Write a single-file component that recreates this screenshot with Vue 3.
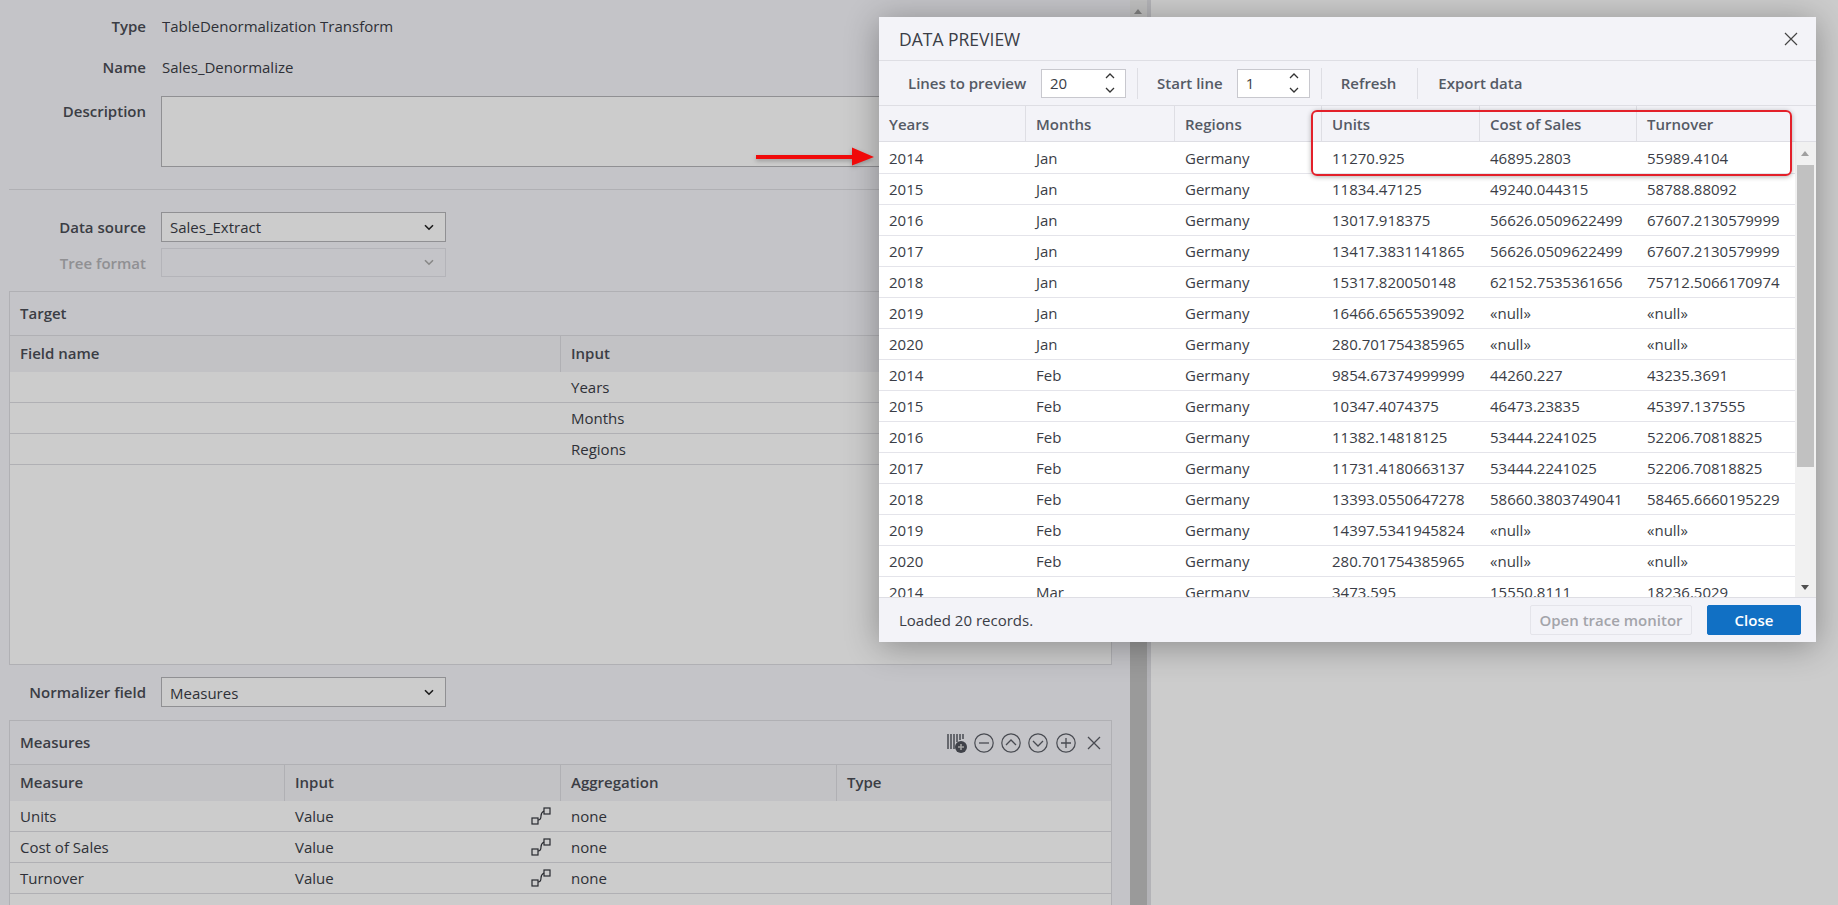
<script setup>
const targetRows = ['Years', 'Months', 'Regions']
const measureRows = ['Units', 'Cost of Sales', 'Turnover']

const previewRows = [
  ['2014', 'Jan', 'Germany', '11270.925', '46895.2803', '55989.4104'],
  ['2015', 'Jan', 'Germany', '11834.47125', '49240.044315', '58788.88092'],
  ['2016', 'Jan', 'Germany', '13017.918375', '56626.0509622499', '67607.2130579999'],
  ['2017', 'Jan', 'Germany', '13417.3831141865', '56626.0509622499', '67607.2130579999'],
  ['2018', 'Jan', 'Germany', '15317.820050148', '62152.7535361656', '75712.5066170974'],
  ['2019', 'Jan', 'Germany', '16466.6565539092', '«null»', '«null»'],
  ['2020', 'Jan', 'Germany', '280.701754385965', '«null»', '«null»'],
  ['2014', 'Feb', 'Germany', '9854.67374999999', '44260.227', '43235.3691'],
  ['2015', 'Feb', 'Germany', '10347.4074375', '46473.23835', '45397.137555'],
  ['2016', 'Feb', 'Germany', '11382.14818125', '53444.2241025', '52206.70818825'],
  ['2017', 'Feb', 'Germany', '11731.4180663137', '53444.2241025', '52206.70818825'],
  ['2018', 'Feb', 'Germany', '13393.0550647278', '58660.3803749041', '58465.6660195229'],
  ['2019', 'Feb', 'Germany', '14397.5341945824', '«null»', '«null»'],
  ['2020', 'Feb', 'Germany', '280.701754385965', '«null»', '«null»'],
  ['2014', 'Mar', 'Germany', '3473.595', '15550.8111', '18236.5029'],
]
const previewCols = ['Years', 'Months', 'Regions', 'Units', 'Cost of Sales', 'Turnover']
</script>

<template>
  <div class="page">
    <div class="editor">
      <div class="info-row"><span class="lbl">Type</span><span class="val">TableDenormalization Transform</span></div>
      <div class="info-row"><span class="lbl">Name</span><span class="val">Sales_Denormalize</span></div>
      <div class="desc-row">
        <span class="lbl">Description</span>
        <div class="textarea"></div>
      </div>
      <div class="divider"></div>

      <div class="sel-row">
        <span class="lbl lbl--bold">Data source</span>
        <div class="select">
          <span>Sales_Extract</span>
          <svg class="chev" width="10" height="7" viewBox="0 0 10 7"><path d="M1 1.2l4 4 4-4" fill="none" stroke="#222" stroke-width="1.6" /></svg>
        </div>
      </div>
      <div class="sel-row sel-row--off">
        <span class="lbl lbl--bold">Tree format</span>
        <div class="select select--off">
          <svg class="chev" width="10" height="7" viewBox="0 0 10 7"><path d="M1 1.2l4 4 4-4" fill="none" stroke="#aaa" stroke-width="1.6" /></svg>
        </div>
      </div>

      <section class="panel panel--target">
        <div class="panel-head">Target</div>
        <div class="grid-head grid-head--target">
          <div class="gh">Field name</div>
          <div class="gh">Input</div>
        </div>
        <div v-for="r in targetRows" :key="r" class="grid-row grid-row--target">
          <div></div>
          <div class="gc">{{ r }}</div>
        </div>
      </section>

      <div class="norm-row">
        <span class="lbl lbl--norm">Normalizer field</span>
        <div class="select">
          <span class="select-low">Measures</span>
          <svg class="chev" width="10" height="7" viewBox="0 0 10 7"><path d="M1 1.2l4 4 4-4" fill="none" stroke="#222" stroke-width="1.6" /></svg>
        </div>
      </div>

      <section class="panel panel--measures">
        <div class="panel-head panel-head--tools">
          <span>Measures</span>
          <div class="tools">
            <svg width="22" height="20" viewBox="0 0 22 20" class="tool-bar">
              <path d="M2 1v15M5 1v15M8 1v15M11 1v8M14 1v6M17 1v5" fill="none" stroke="#5a5d66" stroke-width="1.5" />
              <circle cx="15" cy="14" r="6" fill="#50535c" />
              <path d="M15 11v6M12 14h6" stroke="#ccc" stroke-width="1.6" />
            </svg>
            <svg width="20" height="20" viewBox="0 0 20 20"><circle cx="10" cy="10" r="9.2" class="ring" /><path d="M5 10h10" class="ink" /></svg>
            <svg width="20" height="20" viewBox="0 0 20 20"><circle cx="10" cy="10" r="9.2" class="ring" /><path d="M5 12l5-5 5 5" class="ink" /></svg>
            <svg width="20" height="20" viewBox="0 0 20 20"><circle cx="10" cy="10" r="9.2" class="ring" /><path d="M5 8l5 5 5-5" class="ink" /></svg>
            <svg width="20" height="20" viewBox="0 0 20 20"><circle cx="10" cy="10" r="9.2" class="ring" /><path d="M5 10h10M10 5v10" class="ink" /></svg>
            <svg width="14" height="14" viewBox="0 0 14 14" class="tool-x"><path d="M1 1l12 12M13 1L1 13" class="ink" /></svg>
          </div>
        </div>
        <div class="grid-head grid-head--measures">
          <div class="gh">Measure</div>
          <div class="gh">Input</div>
          <div class="gh">Aggregation</div>
          <div class="gh">Type</div>
        </div>
        <div v-for="r in measureRows" :key="r" class="grid-row grid-row--measures">
          <div class="gc">{{ r }}</div>
          <div class="gc gc--link">
            <span>Value</span>
            <svg width="20" height="18" viewBox="0 0 20 18">
              <rect x="1" y="11" width="6" height="6" class="link-ico" />
              <rect x="13" y="1" width="6" height="6" class="link-ico" />
              <path d="M7 13c3 0 3-2 3-4s1-4 3-5" class="link-ico" />
            </svg>
          </div>
          <div class="gc">none</div>
          <div></div>
        </div>
      </section>
    </div>

    <div class="editor-scroll">
      <span class="tri tri--up"></span>
      <div class="editor-thumb"></div>
    </div>
    <div class="splitter"></div>
    <div class="side"></div>

    <div class="overlay"></div>

    <div class="dialog">
      <header class="dlg-title">
        <span>DATA PREVIEW</span>
        <svg width="14" height="14" viewBox="0 0 14 14"><path d="M1 1l12 12M13 1L1 13" fill="none" stroke="#444" stroke-width="1.2" /></svg>
      </header>

      <div class="dlg-tools">
        <span class="tool-lbl tool-lbl--lines">Lines to preview</span>
        <div class="spin spin--lines">
          <span>20</span>
          <svg width="10" height="22" viewBox="0 0 10 22"><path d="M1 6l4-4 4 4M1 16l4 4 4-4" fill="none" stroke="#333" stroke-width="1.3" /></svg>
        </div>
        <i class="sep"></i>
        <span class="tool-lbl">Start line</span>
        <div class="spin spin--start">
          <span>1</span>
          <svg width="10" height="22" viewBox="0 0 10 22"><path d="M1 6l4-4 4 4M1 16l4 4 4-4" fill="none" stroke="#333" stroke-width="1.3" /></svg>
        </div>
        <i class="sep"></i>
        <span class="tool-lbl">Refresh</span>
        <i class="sep"></i>
        <span class="tool-lbl">Export data</span>
      </div>

      <div class="pv-head">
        <div v-for="c in previewCols" :key="c" class="pv-th">{{ c }}</div>
      </div>

      <div class="pv-body">
        <div class="pv-rows">
          <div v-for="(row, i) in previewRows" :key="i" class="pv-row">
            <div v-for="(cell, j) in row" :key="j" class="pv-td">{{ cell }}</div>
          </div>
        </div>
        <div class="pv-scroll">
          <span class="tri tri--up"></span>
          <div class="pv-thumb"></div>
          <span class="tri tri--down"></span>
        </div>
      </div>

      <footer class="dlg-foot">
        <span class="status">Loaded 20 records.</span>
        <button class="btn btn--off">Open trace monitor</button>
        <button class="btn btn--primary">Close</button>
      </footer>
    </div>

    <!-- annotations drawn on top of the screenshot -->
    <div class="mark-box"></div>
    <svg class="mark-arrow" width="120" height="20" viewBox="0 0 120 20">
      <path d="M0 8h96v-7.500L118 10 96 18.500V12H0z" fill="#f00a0a" />
    </svg>
  </div>
</template>

<style>
html, body { margin: 0; padding: 0; }
</style>

<style scoped>
.page {
  position: relative;
  display: flex;
  width: 1838px;
  height: 905px;
  overflow: hidden;
  background: #f6f6fa;
  font-family: "Open Sans", "Liberation Sans", sans-serif;
  font-size: 15px;
  color: #3a3d46;
}

.editor {
  width: 1130px;
  height: 905px;
  flex-shrink: 0;
  padding: 5px 18px 0 9px;
  box-sizing: border-box;
  overflow: hidden;
}

.info-row {
  display: flex;
  align-items: center;
  height: 41px;
}
.lbl {
  width: 137px;
  flex-shrink: 0;
  text-align: right;
  margin-right: 15px;
  font-weight: 600;
  color: #4a4d56;
}
.val { color: #3a3d46; padding-left: 1px; }

.desc-row {
  display: flex;
  height: 70px;
  margin-top: 9px;
}
.desc-row .lbl { padding-top: 5px; }
.textarea {
  width: 100%;
  height: 71px;
  box-sizing: border-box;
  background: #fff;
  border: 1px solid #b4b4b8;
}

.divider {
  height: 1px;
  margin-top: 23px;
  background: #dcdce2;
}

.sel-row {
  display: flex;
  align-items: center;
  height: 30px;
  margin-top: 22px;
}
.sel-row--off {
  margin-top: 6px;
  height: 29px;
}
.sel-row--off .lbl { color: #b4b4b8; }

.select {
  display: flex;
  align-items: center;
  justify-content: space-between;
  width: 285px;
  height: 30px;
  box-sizing: border-box;
  padding: 0 11px 0 8px;
  background: #fff;
  border: 1px solid #b4b4b8;
  flex-shrink: 0;
}
.select--off {
  height: 29px;
  background: #f6f6fa;
  border-color: #e2e2e8;
  justify-content: flex-end;
}
.select-low { padding-top: 2px; }
.chev { display: block; }

.panel {
  box-sizing: border-box;
  border: 1px solid #dcdce2;
  background: #fff;
}
.panel--target {
  height: 374px;
  margin-top: 14px;
}
.panel--measures {
  margin-top: 13px;
  height: 240px;
}
.panel-head {
  height: 44px;
  line-height: 43px;
  padding-left: 10px;
  box-sizing: border-box;
  background: #f6f6fa;
  border-bottom: 1px solid #dcdce2;
  font-weight: 600;
  color: #4a4d56;
}
.panel-head--tools {
  display: flex;
  align-items: center;
  justify-content: space-between;
  padding-right: 10px;
}
.tools {
  display: flex;
  align-items: center;
  gap: 7.300px;
}
.tool-bar { margin-right: -1px; }
.tool-x { margin-left: 4px; }
.ring { fill: none; stroke: #5a5d66; stroke-width: 1.2; }
.ink { fill: none; stroke: #5a5d66; stroke-width: 1.3; }

.grid-head,
.grid-row {
  display: grid;
}
.grid-head--target,
.grid-row--target { grid-template-columns: 551px 1fr; }
.grid-head--measures,
.grid-row--measures { grid-template-columns: 275px 276px 276px 1fr; }

.grid-head {
  height: 36px;
  background: #f3f3f7;
}
.gh {
  display: flex;
  align-items: center;
  padding: 0 0 2px 10px;
  border-right: 1px solid #dcdce2;
  font-weight: 600;
  color: #4a4d56;
}
.gh:last-child { border-right: none; }
.grid-row {
  height: 31px;
  box-sizing: border-box;
  border-bottom: 1px solid #dcdce2;
}
.gc {
  display: flex;
  align-items: center;
  padding-left: 10px;
  line-height: 30px;
}
.gc--link {
  justify-content: space-between;
  padding-right: 10px;
}
.link-ico { fill: none; stroke: #33353c; stroke-width: 1.2; }

.norm-row {
  display: flex;
  align-items: center;
  height: 30px;
  margin-top: 12px;
}
.lbl--norm { font-weight: 600; }

.editor-scroll {
  position: relative;
  width: 17px;
  flex-shrink: 0;
  background: #f1f1f1;
}
.editor-scroll .tri--up {
  position: absolute;
  top: 9px;
  left: 4px;
}
.editor-thumb {
  position: absolute;
  top: 60px;
  bottom: 0;
  left: 0;
  right: 0;
  background: #c1c1c1;
}
.splitter {
  width: 4px;
  flex-shrink: 0;
  background: #e0e0e5;
}
.side {
  flex: 1;
  background: #ffffff;
}

.tri {
  display: block;
  width: 0;
  height: 0;
  border-left: 4.500px solid transparent;
  border-right: 4.500px solid transparent;
}
.tri--up { border-bottom: 5px solid #a0a0a0; }
.tri--down { border-top: 5px solid #505050; }

.overlay {
  position: absolute;
  inset: 0;
  background: rgba(0, 0, 0, 0.2);
}

.dialog {
  position: absolute;
  left: 879px;
  top: 17px;
  width: 937px;
  height: 625px;
  display: flex;
  flex-direction: column;
  background: #f3f3f8;
  box-shadow: 0 4px 32px rgba(0, 0, 0, 0.32);
}
.dlg-title {
  display: flex;
  align-items: center;
  justify-content: space-between;
  height: 44px;
  flex-shrink: 0;
  box-sizing: border-box;
  padding: 0 18px 0 20px;
  border-bottom: 1px solid #dedee4;
  font-size: 17.500px;
  color: #3a3d46;
}
.dlg-tools {
  display: flex;
  align-items: center;
  height: 45px;
  flex-shrink: 0;
  box-sizing: border-box;
  padding-left: 29px;
  border-bottom: 1px solid #dedee4;
}
.tool-lbl {
  font-weight: 600;
  color: #555a65;
  white-space: nowrap;
}
.tool-lbl--lines { width: 133px; flex-shrink: 0; }
.spin {
  display: flex;
  align-items: center;
  justify-content: space-between;
  height: 29px;
  box-sizing: border-box;
  padding: 0 10px 0 8px;
  background: #fff;
  border: 1px solid #c8c8ce;
  color: #3a3d46;
  flex-shrink: 0;
}
.spin--lines { width: 85px; }
.spin--start { width: 73px; margin-left: 14px; }
.sep {
  width: 1px;
  height: 31px;
  margin: 0 19px 0 11px;
  background: #dedee4;
  flex-shrink: 0;
}
.tool-lbl + .sep { margin: 0 20px 0 21px; }

.pv-head,
.pv-row {
  display: grid;
  grid-template-columns: 147px 149px 147px 158px 157px 158px;
}
.pv-head {
  height: 36px;
  flex-shrink: 0;
  box-sizing: border-box;
  border-bottom: 1px solid #dedee4;
}
.pv-th {
  display: flex;
  align-items: center;
  padding-left: 10px;
  border-right: 1px solid #dedee4;
  font-weight: 600;
  color: #555a65;
}
.pv-th:last-child { border-right: none; }

.pv-body {
  display: flex;
  flex: 1;
  min-height: 0;
  overflow: hidden;
  background: #fff;
  border-bottom: 1px solid #dedee4;
}
.pv-rows {
  width: 916px;
  flex-shrink: 0;
  padding-top: 1px;
  overflow: hidden;
}
.pv-row {
  height: 31px;
  box-sizing: border-box;
  border-bottom: 1px solid #e4e4ea;
}
.pv-td {
  padding-left: 10px;
  line-height: 31px;
  white-space: nowrap;
  color: #3a3d46;
}
.pv-scroll {
  position: relative;
  flex: 1;
  background: #f1f1f1;
}
.pv-scroll .tri {
  position: absolute;
  left: 6px;
}
.pv-scroll .tri--up { top: 9px; }
.pv-scroll .tri--down { bottom: 7px; }
.pv-thumb {
  position: absolute;
  top: 23px;
  left: 2px;
  right: 2px;
  height: 302px;
  background: #c1c1c1;
}

.dlg-foot {
  display: flex;
  align-items: center;
  height: 44px;
  flex-shrink: 0;
  padding: 0 15px 0 20px;
}
.status {
  flex: 1;
  color: #3a3d46;
}
.btn {
  height: 30px;
  box-sizing: border-box;
  font-family: inherit;
  font-size: 15px;
  font-weight: 600;
  border-radius: 2px;
  padding: 0;
}
.btn--off {
  width: 162px;
  margin-right: 15px;
  background: #f3f3f8;
  border: 1px solid #e4e4ea;
  color: #a3a4aa;
}
.btn--primary {
  width: 94px;
  background: #1170c4;
  border: 1px solid #1170c4;
  color: #fff;
}

.mark-box {
  position: absolute;
  left: 1311px;
  top: 110px;
  width: 481px;
  height: 66px;
  box-sizing: border-box;
  border: 2px solid #e3202a;
  border-radius: 6px;
  box-shadow: 0 1px 5px rgba(0, 0, 0, 0.3);
}
.mark-arrow {
  position: absolute;
  left: 756px;
  top: 147px;
  filter: drop-shadow(0 2px 2px rgba(0, 0, 0, 0.25));
}
</style>
